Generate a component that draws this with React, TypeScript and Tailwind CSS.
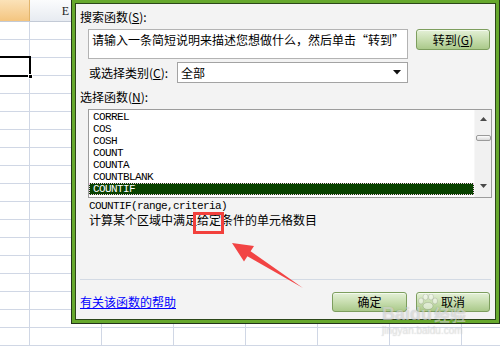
import React from "react";

const items = ["CORREL", "COS", "COSH", "COUNT", "COUNTA", "COUNTBLANK", "COUNTIF"];

function GreenButton({ children, className }: { children: React.ReactNode; className: string }) {
  return (
    <div
      className={
        "flex items-center justify-center rounded-[3px] border border-[#7d9e5e] bg-linear-to-b from-[#e4f0d7] via-[#c8deb0] to-[#aac98a] text-[12px] leading-[14px] text-black shadow-[inset_0_1px_0_#f4faee] " +
        className
      }
    >
      {children}
    </div>
  );
}

export default function App() {
  const rows = Array.from({ length: 18 });
  const cols = Array.from({ length: 7 });
  return (
    <div className="relative w-[500px] h-[350px] overflow-hidden bg-white font-['Noto_Sans_CJK_SC','Noto_Sans',sans-serif]">
      {/* spreadsheet */}
      <div className="flex flex-col">
        <div className="flex h-[22px] border-b border-[#c3cad6]">
          <div className="w-[30px] shrink-0 border-r border-[#e2b56c] bg-linear-to-b from-[#fbe2b8] to-[#f4c57f]" />
          <div className="w-[72px] shrink-0 border-r border-[#d5dae3] bg-linear-to-b from-[#fbfcfd] to-[#e7ebf1] flex items-center justify-center text-[12px] font-['Liberation_Serif',serif] text-[#222]">
            E
          </div>
          {cols.slice(1).map((_, i) => (
            <div key={i} className="w-[72px] shrink-0 border-r border-[#d5dae3] bg-linear-to-b from-[#fbfcfd] to-[#e7ebf1]" />
          ))}
        </div>
        {rows.map((_, r) => (
          <div key={r} className="flex h-[18px] shrink-0 border-b border-[#d0d7e5]">
            <div className="w-[30px] shrink-0 border-r border-[#d0d7e5]" />
            {cols.map((_, c) => (
              <div key={c} className="w-[72px] shrink-0 border-r border-[#d0d7e5]" />
            ))}
          </div>
        ))}
      </div>
      {/* selected cell */}
      <div className="absolute left-[-2px] top-[56px] w-[33px] h-[21px] border-2 border-black" />
      <div className="absolute left-[28px] top-[74px] w-[5px] h-[5px] bg-black border border-white" />

      {/* dialog */}
      <div className="absolute left-[71px] top-[-1px] w-[429px] h-[325px] border border-[#22331a]">
        <div className="h-full border-[3px] border-[#66a82d]">
          <div className="h-full border border-[#2c4619] bg-[#f3f3f3] pl-[4px] flex flex-col text-[12px] leading-[14px] text-black">
            <div className="mt-[6px] h-[14px]">
              搜索函数(<span className="underline">S</span>):
            </div>
            <div className="mt-[5px] ml-[8px] flex items-start">
              <div className="w-[320px] h-[30px] border border-[#b3b3b3] bg-white pl-[3px] pt-[3px] whitespace-nowrap overflow-hidden">
                请输入一条简短说明来描述您想做什么，然后单击“转到”
              </div>
              <GreenButton className="ml-[8px] w-[74px] h-[21px]">
                转到(<span className="underline">G</span>)
              </GreenButton>
            </div>
            <div className="mt-[3px] ml-[9px] flex items-center h-[21px]">
              <span className="w-[88px] shrink-0">
                或选择类别(<span className="underline">C</span>):
              </span>
              <div className="w-[231px] h-[21px] border border-[#a3a3a3] bg-white flex items-center pl-[3px] pr-[6px]">
                <span className="flex-1">全部</span>
                <svg width="8" height="5" viewBox="0 0 8 5">
                  <polygon points="0,0 8,0 4,4.5" fill="#111" />
                </svg>
              </div>
            </div>
            <div className="mt-[7px] h-[14px]">
              选择函数(<span className="underline">N</span>):
            </div>
            <div className="mt-[5px] ml-[8px] w-[404px] h-[89px] shrink-0 border border-[#9c9c9c] bg-white flex">
              <div className="flex-1 pt-[1px] flex flex-col font-['Liberation_Mono',monospace] text-[11px] leading-[12px] tracking-[-0.6px]">
                {items.map((it) => (
                  <div
                    key={it}
                    className={
                      it === "COUNTIF"
                        ? "h-[12px] pl-[3px] bg-[#094200] text-white border border-dotted border-[#f2c8e8] leading-[10px]"
                        : "h-[12px] pl-[4px]"
                    }
                  >
                    {it}
                  </div>
                ))}
              </div>
              <div className="w-[17px] h-full bg-[#f1f1f1] border-l border-[#f7f7f7] flex flex-col items-center">
                <div className="h-[17px] w-full flex items-center justify-center">
                  <svg width="7" height="4" viewBox="0 0 7 4">
                    <polygon points="0,4 7,4 3.5,0" fill="#4a4a4a" />
                  </svg>
                </div>
                <div className="mt-[8px] w-[15px] h-[6px] rounded-[2px] border border-[#9a9a9a] bg-linear-to-b from-[#fdfdfd] to-[#d9d9d9]" />
                <div className="mt-auto mb-[3px] h-[17px] w-full flex items-center justify-center">
                  <svg width="7" height="4" viewBox="0 0 7 4">
                    <polygon points="0,0 7,0 3.5,4" fill="#4a4a4a" />
                  </svg>
                </div>
              </div>
            </div>
            <div className="mt-[2px] ml-[9px] h-[13px] text-[11px] leading-[13px] font-['Liberation_Mono',monospace] tracking-[-0.6px]">
              COUNTIF(range,criteria)
            </div>
            <div className="ml-[9px] h-[14px]">计算某个区域中满足给定条件的单元格数目</div>
            <div className="mt-[52px] w-[411px] h-px bg-[#d3dae4]" />
            <div className="mt-[12px] w-[410px] h-[20px] flex items-center">
              <span className="text-[#0000ff] underline">有关该函数的帮助</span>
              <div className="flex-1" />
              <GreenButton className="w-[75px] h-[20px]">确定</GreenButton>
              <GreenButton className="ml-[9px] w-[74px] h-[20px]">取消</GreenButton>
            </div>
          </div>
        </div>
      </div>

      {/* annotations */}
      <div className="absolute left-[193px] top-[212px] w-[31px] h-[22px] border-[3px] border-[#f2403c]" />
      <svg className="absolute left-0 top-0 pointer-events-none" width="500" height="350" viewBox="0 0 500 350">
        <polygon
          points="232,243 254,246 250.6,251.2 303,288 247.4,256.2 244,261.5"
          fill="#f24444"
        />
      </svg>

      {/* watermark */}
      <div className="absolute left-[382px] top-[304px] pointer-events-none text-white/50 [text-shadow:0_0_1px_rgba(0,0,0,0.25)]">
        <div className="flex items-end font-['Liberation_Sans',sans-serif] font-bold text-[18px] leading-[20px]">
          <span>Bai</span>
          <span>du</span>
          <span className="font-['Noto_Sans_CJK_SC',sans-serif] text-[16px] ml-[2px]">经验</span>
        </div>
        <div className="font-['Liberation_Sans',sans-serif] text-[10px] leading-[11px] mt-[1px]">jingyan.baidu.com</div>
      </div>
      <svg className="absolute left-[417px] top-[294px] pointer-events-none" width="22" height="16" viewBox="0 0 22 16">
        <g fill="rgba(255,255,255,0.5)" stroke="rgba(0,0,0,0.2)" strokeWidth="0.6">
          <ellipse cx="4" cy="7" rx="2.5" ry="3" />
          <ellipse cx="8.5" cy="3" rx="2.5" ry="3" />
          <ellipse cx="14" cy="3" rx="2.5" ry="3" />
          <ellipse cx="18" cy="7" rx="2.5" ry="3" />
          <ellipse cx="11" cy="12" rx="5" ry="3.5" />
        </g>
      </svg>
    </div>
  );
}
